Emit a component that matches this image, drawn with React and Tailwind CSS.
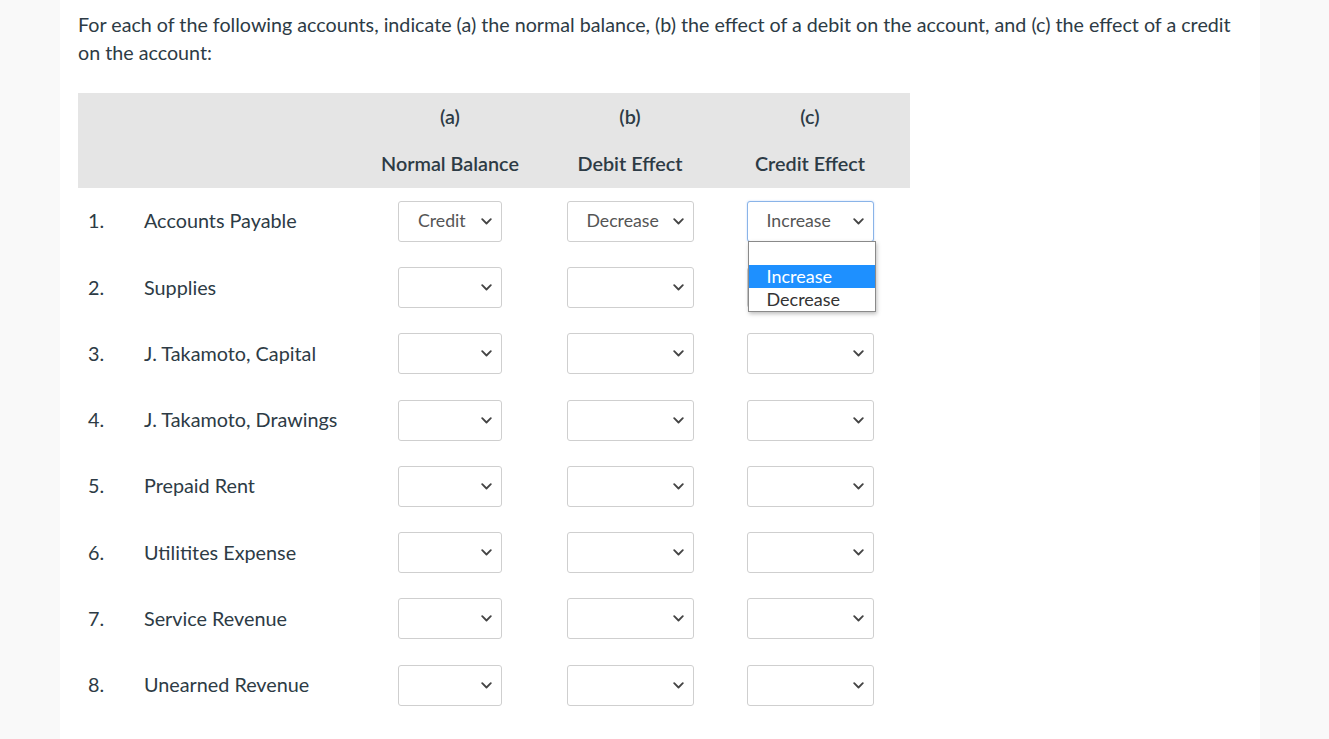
import React from 'react';

const rows = [
  { n: '1.', name: 'Accounts Payable', a: 'Credit', b: 'Decrease', c: 'Increase' },
  { n: '2.', name: 'Supplies' },
  { n: '3.', name: 'J. Takamoto, Capital' },
  { n: '4.', name: 'J. Takamoto, Drawings' },
  { n: '5.', name: 'Prepaid Rent' },
  { n: '6.', name: 'Utilitites Expense' },
  { n: '7.', name: 'Service Revenue' },
  { n: '8.', name: 'Unearned Revenue' },
];

const Chevron = () => (
  <svg width="11" height="7" viewBox="0 0 11 7" className="shrink-0">
    <path d="M1.2 1.2 L5.5 5.5 L9.8 1.2" fill="none" stroke="#444" strokeWidth="1.8" strokeLinecap="round" strokeLinejoin="round" />
  </svg>
);

const Select = ({ value, width, focused, open }) => (
  <div className="relative">
    <div
      className={`flex items-center justify-between h-[41px] rounded-[3px] bg-white pl-[19px] pr-[9px] border ${
        focused ? 'border-[#8ab4e8] shadow-[0_0_2px_rgba(66,133,244,0.35)]' : 'border-[#cfcfcf]'
      } ${width}`}
    >
      <span className="text-[17.7px] text-[#555]">{value || ''}</span>
      <Chevron />
    </div>
    {open && (
      <div className="absolute left-[1px] top-[40px] w-[128px] bg-white border border-[#8a8a8a] shadow-[1px_2px_4px_rgba(0,0,0,0.25)] z-10 text-[18px] leading-[23px]">
        <div className="h-[23px]" />
        <div className="h-[23px] bg-[#1e90ff] text-white pl-[18px]">Increase</div>
        <div className="h-[23px] text-[#333] pl-[18px]">Decrease</div>
      </div>
    )}
  </div>
);

export default function App() {
  return (
    <div className="min-h-[739px] bg-[#f9f9f9] flex" style={{ fontFamily: 'Lato, "Open Sans", sans-serif' }}>
      <div className="ml-[60px] w-[1200px] bg-white pl-[18px] pr-[20px] pt-[11px] pb-[30px] text-[#2d3b45]">
        <p className="text-[19.7px] leading-[28px]">
          For each of the following accounts, indicate (a) the normal balance, (b) the effect of a debit on the account, and (c) the effect of a credit on the account:
        </p>

        <div className="mt-[26px] w-[832px]">
          <div className="grid grid-cols-[66px_216px_180px_180px_180px] bg-[#e5e5e5] h-[95px] text-[19.8px] font-semibold">
            <div />
            <div />
            {[['(a)', 'Normal Balance'], ['(b)', 'Debit Effect'], ['(c)', 'Credit Effect']].map(([k, label]) => (
              <div key={k} className="flex flex-col items-center pt-[11px]">
                <span className="leading-[24px]">{k}</span>
                <span className="leading-[24px] mt-[23px]">{label}</span>
              </div>
            ))}
          </div>

          {rows.map((r, i) => (
            <div key={r.n} className="grid grid-cols-[66px_216px_180px_180px_180px] h-[66.3px] items-center text-[19.8px]">
              <div className="pl-[10px]">{r.n}</div>
              <div>{r.name}</div>
              <div className="flex justify-center">
                <Select value={r.a} width="w-[104px]" />
              </div>
              <div className="flex justify-center">
                <Select value={r.b} width="w-[127px]" />
              </div>
              <div className="flex justify-center">
                <Select value={r.c} width="w-[127px]" focused={i === 0} open={i === 0} />
              </div>
            </div>
          ))}
        </div>
      </div>
    </div>
  );
}
